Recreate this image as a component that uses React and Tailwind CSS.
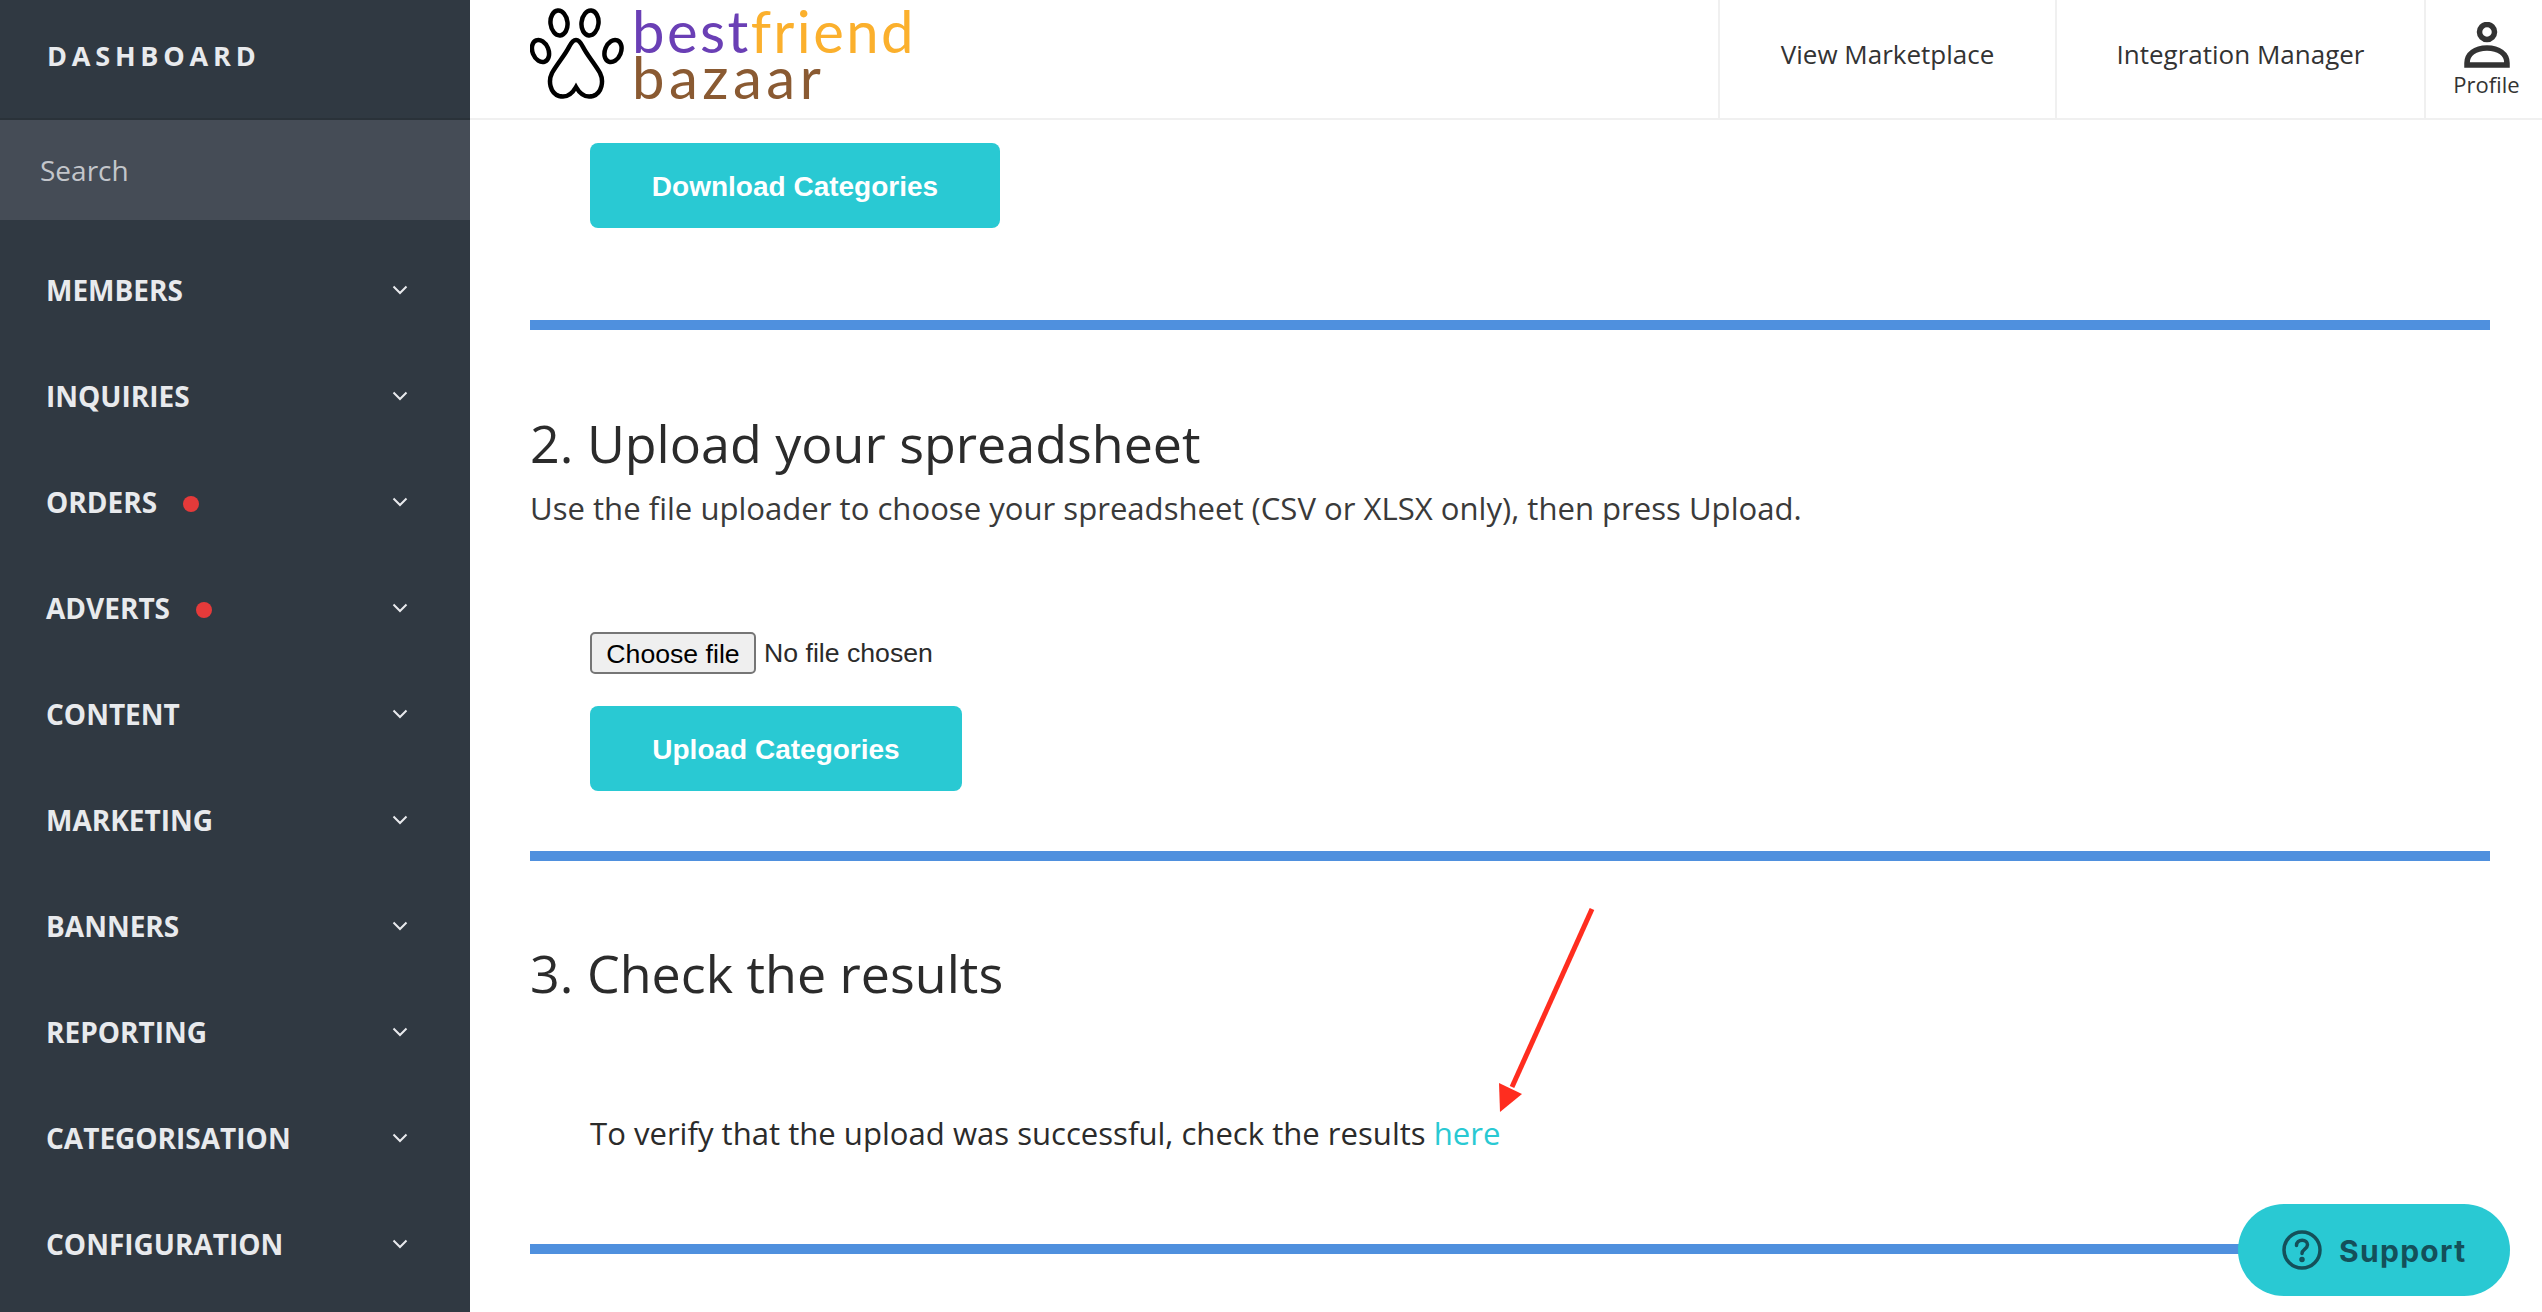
import React from "react";

const menuItems = [
  { label: "MEMBERS" },
  { label: "INQUIRIES" },
  { label: "ORDERS", dot: true },
  { label: "ADVERTS", dot: true },
  { label: "CONTENT" },
  { label: "MARKETING" },
  { label: "BANNERS" },
  { label: "REPORTING" },
  { label: "CATEGORISATION" },
  { label: "CONFIGURATION" },
];

const Chevron = () => (
  <svg width="16" height="10" viewBox="0 0 16 10" fill="none" className="text-[#e8eaed]">
    <path d="M1.5 1.5 8 8l6.5-6.5" stroke="currentColor" strokeWidth="2" />
  </svg>
);

const Paw = () => (
  <svg width="94" height="92" viewBox="0 0 94 92" fill="none" stroke="#000" strokeWidth="4.5" className="shrink-0">
    <ellipse cx="29" cy="15" rx="8.5" ry="12.5" transform="rotate(-6 29 15)" />
    <ellipse cx="60" cy="15" rx="8.5" ry="12.5" transform="rotate(6 60 15)" />
    <ellipse cx="10.5" cy="43" rx="8" ry="11.5" transform="rotate(-22 10.5 43)" />
    <ellipse cx="83" cy="43" rx="8" ry="11.5" transform="rotate(22 83 43)" />
    <path d="M46 32c-3 0-5 3-7 7-4 8-12 17-17 26-4 8-2 20 7 23 7 2 13-2 17-9 4 7 10 11 17 9 9-3 11-15 7-23-5-9-13-18-17-26-2-4-4-7-7-7Z" />
  </svg>
);

const Rule = ({ className }) => <div className={`h-[10px] bg-[#4f90de] ${className}`} />;

const Heading = ({ children, className }) => (
  <h2 className={`text-[52px] leading-[70px] text-[#2b2b2b] ${className}`}>{children}</h2>
);

const TealButton = ({ children, className }) => (
  <button className={`h-[85px] rounded-lg bg-[#29c9d3] pt-[2px] text-[28px] font-bold text-white font-['Liberation_Sans',sans-serif] ${className}`}>
    {children}
  </button>
);

export default function App() {
  return (
    <div className="relative flex h-screen w-full overflow-hidden bg-white font-['Open_Sans',sans-serif]">
      {/* sidebar */}
      <aside className="flex w-[470px] shrink-0 flex-col bg-[#303942]">
        <div className="flex h-[120px] items-center border-b-2 border-[#2a3239] pb-[6px] pl-[47px] text-[27px] font-bold tracking-[4.8px] text-[#e8eaed]">
          DASHBOARD
        </div>
        <div className="flex h-[100px] items-center bg-[#454c56] pl-[40px] text-[28px] text-[#c3c6cb]">Search</div>
        <nav className="flex flex-col pt-[17px]">
          {menuItems.map((item) => (
            <div key={item.label} className="flex h-[106px] items-center pl-[46px] pr-[62px]">
              <span className="text-[28px] font-bold text-[#e8eaed]">{item.label}</span>
              {item.dot && <span className="ml-[26px] mt-1 h-4 w-4 rounded-full bg-[#e53a3a]" />}
              <span className="ml-auto"><Chevron /></span>
            </div>
          ))}
        </nav>
      </aside>

      <main className="flex min-w-0 flex-1 flex-col">
        {/* top bar */}
        <header className="flex h-[120px] shrink-0 items-stretch border-b-2 border-[#f0f0f0] pl-[60px]">
          <div className="flex items-start pt-2">
            <Paw />
            <div className="ml-[8px] font-['Lato',sans-serif] text-[58px] leading-[46px]">
              <div className="h-[46px] tracking-[2.4px]">
                <span className="text-[#6a3fb5]">best</span>
                <span className="text-[#fbb02d]">friend</span>
              </div>
              <div className="tracking-[4.5px] text-[#8a5a32]">bazaar</div>
            </div>
          </div>
          <div className="ml-auto flex text-[26px] text-[#333]">
            <div className="flex w-[337px] items-center justify-center border-l-2 border-[#f0f0f0] pb-[10px]">View Marketplace</div>
            <div className="flex w-[369px] items-center justify-center border-l-2 border-[#f0f0f0] pb-[10px]">Integration Manager</div>
            <div className="flex w-[118px] flex-col items-center border-l-2 border-[#f0f0f0] pl-[5px] pt-[22px]">
              <svg width="46" height="46" viewBox="0 0 46 46" fill="none" stroke="#333" strokeWidth="5.500">
                <circle cx="23" cy="10" r="7.500" />
                <path d="M3 43V41c0-9 8-15 20-15s20 6 20 15v2Z" />
              </svg>
              <span className="mt-[1px] text-[22px] leading-[30px]">Profile</span>
            </div>
          </div>
        </header>

        {/* content */}
        <div className="flex-1 overflow-hidden pl-[60px] pr-[52px] pt-[23px]">
          <TealButton className="ml-[60px] w-[410px]">Download Categories</TealButton>
          <Rule className="mt-[92px]" />

          <Heading className="mt-[78px]">2. Upload your spreadsheet</Heading>
          <p className="mt-[2px] text-[31.1px] leading-[56px] text-[#3a3a3a]">
            Use the file uploader to choose your spreadsheet (CSV or XLSX only), then press Upload.
          </p>

          <div className="ml-[60px] mt-[96px] flex items-center font-['Liberation_Sans',sans-serif] text-[26.67px]">
            <button className="h-[42px] w-[166px] rounded-[5px] border-2 border-[#767676] bg-[#efefef] text-black">
              Choose file
            </button>
            <span className="ml-2 text-[#2b2b2b]">No file chosen</span>
          </div>
          <TealButton className="ml-[60px] mt-8 block w-[372px]">Upload Categories</TealButton>
          <Rule className="mt-[60px]" />

          <Heading className="mt-[77px]">3. Check the results</Heading>
          <p className="ml-[60px] mt-[100px] text-[31.1px] leading-[50px] text-[#2b2b2b]">
            To verify that the upload was successful, check the results <span className="text-[#29c9d3]">here</span>
          </p>
          <Rule className="mt-[86px]" />
        </div>
      </main>

      {/* annotation arrow */}
      <svg className="absolute left-[1490px] top-[900px]" width="110" height="220" viewBox="0 0 110 220" fill="none">
        <path d="M102 9 22 187" stroke="#ff2d1f" strokeWidth="5" />
        <path d="M10 212 9 183 32 194Z" fill="#ff2d1f" />
      </svg>

      {/* support button */}
      <button className="absolute left-[2238px] top-[1204px] flex h-[92px] w-[272px] items-center rounded-[46px] bg-[#29c9d3] pl-[44px] font-['Inter',sans-serif] text-[30px] font-bold tracking-[1.3px] text-[#14505a]">
        <svg width="40" height="40" viewBox="0 0 40 40" fill="none" stroke="currentColor" strokeWidth="3.500" strokeLinecap="round">
          <circle cx="20" cy="20" r="18" />
          <path d="M14.500 15.500c0-3.200 2.500-5.300 5.700-5.300 3.100 0 5.300 2 5.300 4.600 0 4.300-5.500 4.400-5.500 8.700" />
          <circle cx="20" cy="29.500" r="1" fill="currentColor" />
        </svg>
        <span className="ml-[17px] mt-[2px]">Support</span>
      </button>
    </div>
  );
}
